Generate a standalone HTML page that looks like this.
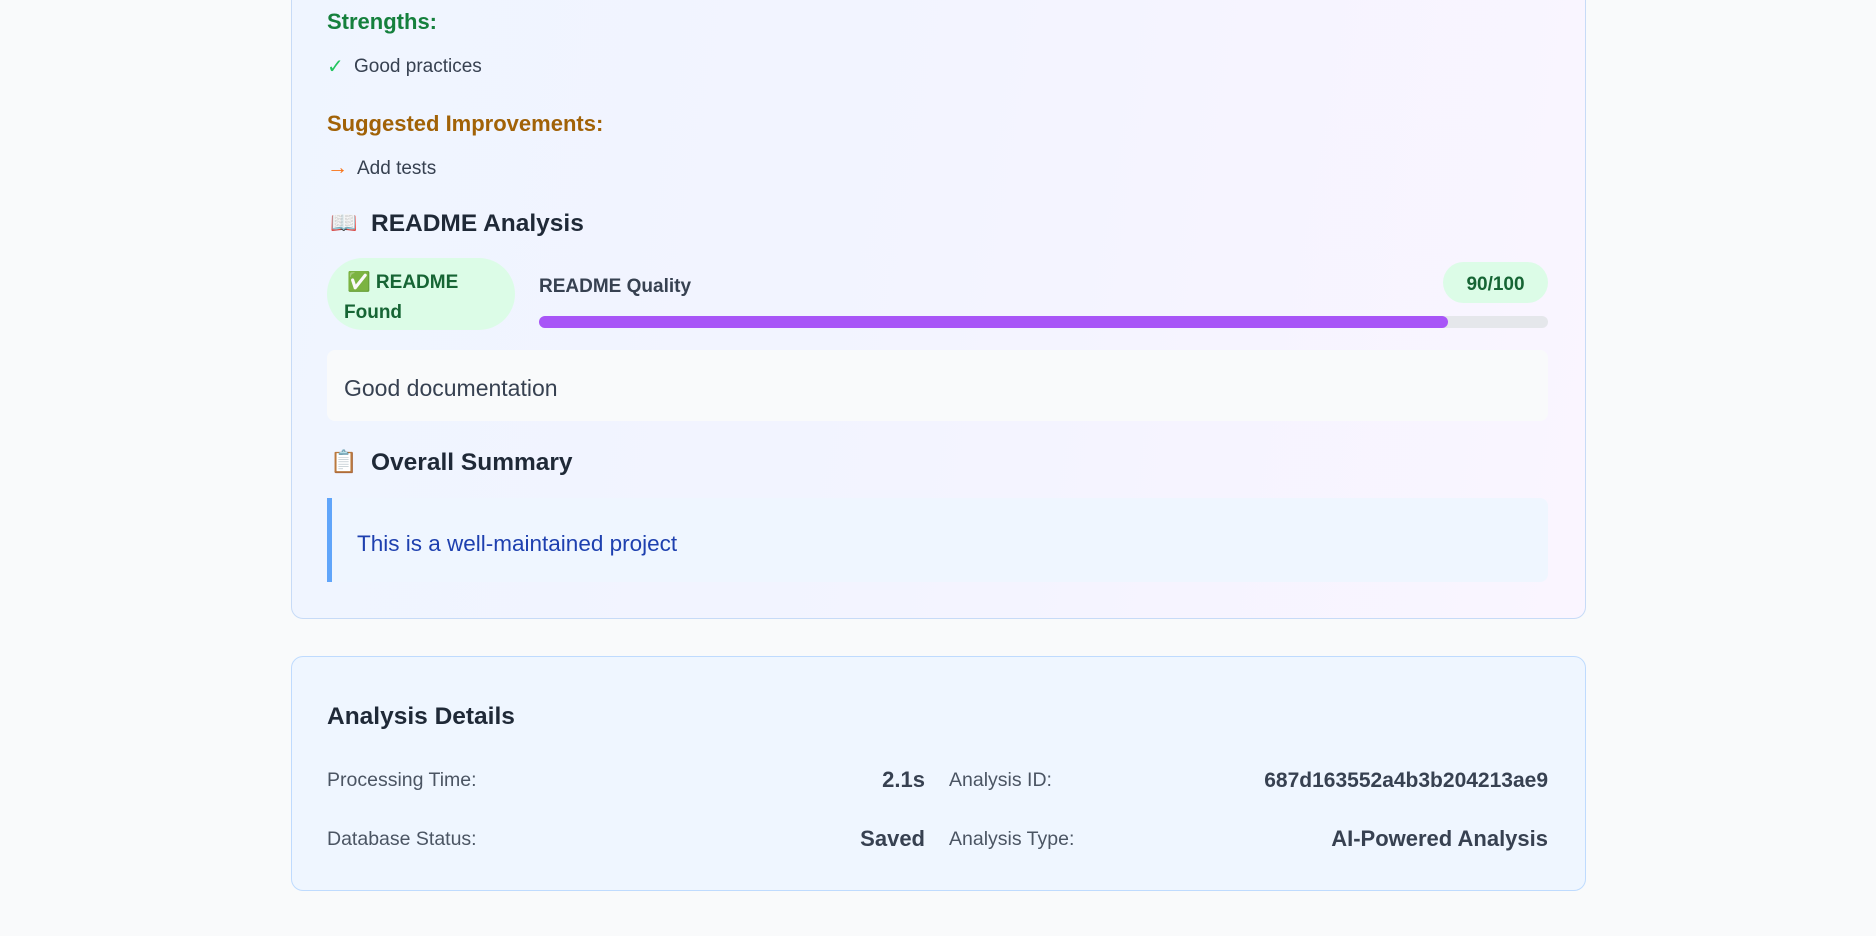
<!DOCTYPE html>
<html><head><meta charset="utf-8"><style>
*{margin:0;padding:0;box-sizing:border-box}
body{width:1876px;height:936px;background:#f9fafb;font-family:"Liberation Sans",sans-serif;position:relative;overflow:hidden;color:#374151}
.a{position:absolute;white-space:nowrap;line-height:1}
.card1{position:absolute;left:291px;top:-20px;width:1295px;height:639px;border:1px solid #c7dbf7;border-radius:12px;background:linear-gradient(100deg,#eff5ff 0%,#f3f4ff 50%,#faf5ff 100%)}
.card2{position:absolute;left:291px;top:656px;width:1295px;height:235px;border:1px solid #bfdbfe;border-radius:12px;background:#eff6ff}
.b{font-weight:bold}
</style></head><body>
<div class="card1"></div>
<div class="a b" style="left:327px;top:11px;font-size:22px;color:#15803d">Strengths:</div>
<div class="a" style="left:327px;top:57px;font-size:20px;color:#22c55e">✓</div>
<div class="a" style="left:354px;top:57px;font-size:19px;color:#374151">Good practices</div>
<div class="a b" style="left:327px;top:113px;font-size:22px;color:#a16207">Suggested Improvements:</div>
<div class="a" style="left:327px;top:157px;font-size:21px;color:#f97316">→</div>
<div class="a" style="left:357px;top:159px;font-size:19px;color:#374151">Add tests</div>
<div class="a" style="left:330px;top:212px;font-size:22px">📖</div>
<div class="a b" style="left:371px;top:212px;font-size:24.5px;color:#1f2937">README Analysis</div>
<div class="a" style="left:327px;top:258px;width:188px;height:72px;border-radius:36px;background:#dcfce7"></div>
<div class="a b" style="left:347px;top:273px;font-size:19px;color:#166534">✅ README</div>
<div class="a b" style="left:344px;top:303px;font-size:19px;color:#166534">Found</div>
<div class="a b" style="left:539px;top:277px;font-size:19px;color:#374151">README Quality</div>
<div class="a" style="left:1443px;top:262px;width:105px;height:41px;border-radius:21px;background:#dcfce7"></div>
<div class="a b" style="left:1443px;top:275px;width:105px;text-align:center;font-size:19px;color:#166534">90/100</div>
<div class="a" style="left:539px;top:316px;width:1009px;height:12px;border-radius:6px;background:#e5e7eb"></div>
<div class="a" style="left:539px;top:316px;width:909px;height:12px;border-radius:6px;background:#a855f7"></div>
<div class="a" style="left:327px;top:350px;width:1221px;height:71px;border-radius:8px;background:#f9fafb"></div>
<div class="a" style="left:344px;top:377px;font-size:23px;color:#374151">Good documentation</div>
<div class="a" style="left:330px;top:451px;font-size:22px">📋</div>
<div class="a b" style="left:371px;top:451px;font-size:24.5px;color:#1f2937">Overall Summary</div>
<div class="a" style="left:327px;top:498px;width:1221px;height:84px;border-radius:0 8px 8px 0;background:#eff6ff;border-left:5px solid #60a5fa"></div>
<div class="a" style="left:357px;top:533px;font-size:22.5px;color:#1e40af">This is a well-maintained project</div>
<div class="card2"></div>
<div class="a b" style="left:327px;top:705px;font-size:24.5px;color:#1f2937">Analysis Details</div>
<div class="a" style="left:327px;top:771px;font-size:19.5px;color:#4b5563">Processing Time:</div>
<div class="a b" style="left:625px;width:300px;text-align:right;top:769px;font-size:22px;color:#374151">2.1s</div>
<div class="a" style="left:949px;top:771px;font-size:19.5px;color:#4b5563">Analysis ID:</div>
<div class="a b" style="left:1148px;width:400px;text-align:right;top:770px;font-size:21px;color:#374151">687d163552a4b3b204213ae9</div>
<div class="a" style="left:327px;top:830px;font-size:19.5px;color:#4b5563">Database Status:</div>
<div class="a b" style="left:625px;width:300px;text-align:right;top:828px;font-size:22px;color:#374151">Saved</div>
<div class="a" style="left:949px;top:830px;font-size:19.5px;color:#4b5563">Analysis Type:</div>
<div class="a b" style="left:1148px;width:400px;text-align:right;top:828px;font-size:22px;color:#374151">AI-Powered Analysis</div>
</body></html>
